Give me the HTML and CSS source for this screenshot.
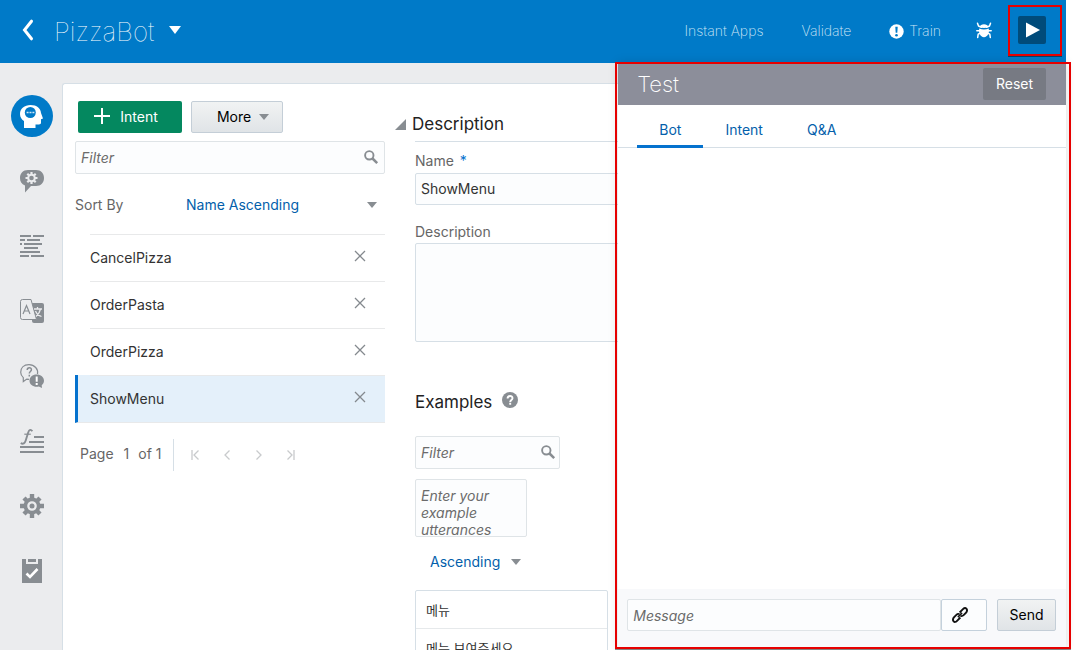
FILE: index.html
```html
<!DOCTYPE html>
<html lang="en">
<head>
<meta charset="utf-8">
<title>PizzaBot</title>
<link rel="stylesheet" href="styles.css">
</head>
<body>
<div class="app">
  <header class="topbar">
    <button class="icon-btn back" aria-label="Back"><svg width="12" height="22" viewBox="0 0 12 22"><path d="M9.500 2.200 2.500 11l7 8.800" fill="none" stroke="#fff" stroke-width="3" stroke-linecap="round" stroke-linejoin="miter"/></svg></button>
    <h1 class="bot-name">PizzaBot</h1>
    <button class="icon-btn" aria-label="Switch bot"><svg width="12" height="8" viewBox="0 0 12 8"><path d="M0 0h12L6 8z" fill="#fff"/></svg></button>
    <nav class="top-nav">
      <a class="top-link" href="#">Instant Apps</a>
      <a class="top-link validate" href="#">Validate</a>
      <a class="top-link train" href="#"><svg width="15" height="15" viewBox="0 0 15 15"><circle cx="7.500" cy="7.500" r="7.200" fill="#fff"/><path d="M6.300 2.800h2.400l-.4 6H6.700z" fill="#007ac8"/><circle cx="7.500" cy="11.200" r="1.300" fill="#007ac8"/></svg>Train</a>
    </nav>
    <button class="icon-btn bug" aria-label="Debug"><svg width="16" height="17" viewBox="0 0 16 17"><g fill="none" stroke="#fff" stroke-width="1.500" stroke-linecap="round" stroke-linejoin="round"><path d="M1.500 1.200 2.500 4l3 1.300M14.500 1.200l-1 2.800-3 1.300M.8 8.700h3M15.200 8.700h-3M4.500 11 2.200 12.200 1.700 15.500M11.500 11l2.300 1.200.5 3.300"/></g><path d="M3.800 5C4 3 5.800 2.200 8 2.200S12 3 12.200 5C9.500 6.300 6.500 6.300 3.800 5z" fill="#fff"/><path d="M3.300 6.600c3 1.300 6.400 1.300 9.400 0 1 3.600-1 8.700-4.700 8.700S2.300 10.200 3.300 6.600z" fill="#fff"/></svg></button>
    <button class="play" aria-label="Test bot"><svg width="14" height="16" viewBox="0 0 14 16"><path d="M0 0.500 14 8 0 15.500z" fill="#fff"/></svg></button>
  </header>
  <div class="workspace">
    <nav class="rail" aria-label="Sections">
      <a class="rail-item current" href="#" aria-label="Intents"><svg width="23" height="25" viewBox="0 0 23 25"><path d="M4 24V17C1.500 15.500 0 13 0 10 0 4.500 4.500 1 10.500 1 17 1 20.500 4.500 21 9l2 5.500-2 .8v3.500c0 1.200-.8 1.700-2 1.700h-3.500V24z" fill="#fff"/><circle cx="10.300" cy="8.500" r="5.500" fill="#007ac8"/><path d="M6.600 7.700h2v1.600h-2zM9.500 7.700h2v1.600h-2zM12.400 7.700h2v1.600h-2z" fill="#cfe8f7"/></svg></a>
      <a class="rail-item" href="#" aria-label="Entities"><svg width="24" height="24" viewBox="0 0 24 24"><path d="M8 1h8c5 0 8 3.500 8 8s-3 8-8 8h-5l-6 6.500v-7C1.500 15.300 0 12.500 0 9c0-4.500 3-8 8-8z" fill="#888d92"/><g transform="translate(11.500 9)" stroke="#ebecee"><path d="M0-6V6M-6 0H6M-4.200-4.200 4.200 4.200M4.200-4.200-4.200 4.200" stroke-width="2.200"/><circle r="3.300" fill="#888d92" stroke-width="2"/></g></svg></a>
      <a class="rail-item" href="#" aria-label="Flows"><svg width="24" height="24" viewBox="0 0 24 24"><path d="M0 2h11M13 2h11M0 6h5M7 6h13M0 10h2M4 10h18M4 14h14M0 18h20M0 22h9M11 22h13" stroke="#888d92" stroke-width="2"/></svg></a>
      <a class="rail-item" href="#" aria-label="Translations"><svg width="24" height="24" viewBox="0 0 24 24"><path d="M12 4h10q2 0 2 2v16q0 2-2 2H14q-2 0-2-2z" fill="#888d92"/><path d="M.5 2.500q0-2 2-2H11L16.500 20.500h-14q-2 0-2-2z" fill="#ebecee" stroke="#888d92"/><path d="M3 15 6.500 6.500 10 15M4.200 12h4.600" fill="none" stroke="#888d92" stroke-width="1.200"/><path d="M14 10h8M17.500 8v2M20.500 10c-.8 4-2.800 6-4.500 7.500M15.500 12c1 2.500 3 4.500 6 5.500" fill="none" stroke="#ebecee" stroke-width="1.300"/></svg></a>
      <a class="rail-item" href="#" aria-label="Q&amp;A"><svg width="24" height="24" viewBox="0 0 24 24"><path d="M17.500 10c1-5-3-9.300-8.500-9.300S.7 4 .7 8.300c0 2.200 1 4 2.600 5.300v4l3.500-2.500 2.200.3" fill="none" stroke="#888d92" stroke-width="1.200"/><path d="M7.200 6c0-3 4.500-3 4.200-.2C11.300 7.600 9.300 7.400 9.300 9.400M9.300 10.700v1.800" fill="none" stroke="#888d92" stroke-width="1.500"/><path d="M16.500 10.500c4.300 0 7.500 2.700 7.500 6.200 0 1.900-.9 3.400-2.300 4.500L22 24l-3.200-1.500c-5 1-9.300-1.800-9.300-5.800 0-3.500 3-6.200 7-6.200z" fill="#888d92"/><path d="M16.700 12.500v5.300M16.700 19v2" stroke="#fff" stroke-width="2"/></svg></a>
      <a class="rail-item" href="#" aria-label="Components"><svg width="24" height="24" viewBox="0 0 24 24"><path d="M14 8h10M9 13h15M0 18h24M0 23h24" stroke="#888d92" stroke-width="2"/><path d="M4.300 5.200h6.500" stroke="#888d92" stroke-width="1.200"/><path d="M12.300 2.200C11 .2 9.200.3 8.200 3.500L5.700 11.500C4.900 14.200 3 15.600.8 14" fill="none" stroke="#888d92" stroke-width="1.900"/></svg></a>
      <a class="rail-item" href="#" aria-label="Settings"><svg width="24" height="24" viewBox="-12 -12 24 24"><path d="M0-12V12M-12 0H12M-8-8 8 8M8-8-8 8" stroke="#888d92" stroke-width="4.400"/><circle r="6.600" fill="#ebecee" stroke="#888d92" stroke-width="3.600"/><circle r="2.500" fill="#888d92"/></svg></a>
      <a class="rail-item" href="#" aria-label="Quality"><svg width="22" height="24" viewBox="0 0 22 24"><path d="M1 0h4v5h12V0h4v24H1z" fill="#888d92"/><path d="M7 0h8v3H7z" fill="#888d92"/><path d="M5.500 14.500 9 18l7.500-8" fill="none" stroke="#fff" stroke-width="2.600"/></svg></a>
    </nav>
    <main class="card">
      <section class="intents">
        <div class="actions">
          <button class="btn-green"><svg width="16" height="16" viewBox="0 0 16 16"><path d="M8 0v16M0 8h16" stroke="#fff" stroke-width="2"/></svg>Intent</button>
          <button class="btn btn-more">More<span class="caret"></span></button>
        </div>
        <label class="search"><input type="text" placeholder="Filter" aria-label="Filter intents"><svg width="14" height="14" viewBox="0 0 14 14"><circle cx="5.300" cy="5.300" r="4.200" fill="none" stroke="#888d92" stroke-width="1.900"/><path d="m8.500 8.500 4.700 4.700" stroke="#888d92" stroke-width="2.500"/></svg></label>
        <div class="sort">
          <label for="sort-by">Sort By</label>
          <div class="picker"><select id="sort-by"><option>Name Ascending</option></select><span class="caret"></span></div>
        </div>
        <ul class="intent-list">
          <li class="intent"><div class="intent-row"><span>CancelPizza</span><button class="icon-btn" aria-label="Delete CancelPizza"><svg width="10" height="10" viewBox="0 0 10 10"><path d="m0 0 10 10M10 0 0 10" stroke="#84898e" stroke-width="1.300"/></svg></button></div></li>
          <li class="intent"><div class="intent-row"><span>OrderPasta</span><button class="icon-btn" aria-label="Delete OrderPasta"><svg width="10" height="10" viewBox="0 0 10 10"><path d="m0 0 10 10M10 0 0 10" stroke="#84898e" stroke-width="1.300"/></svg></button></div></li>
          <li class="intent"><div class="intent-row"><span>OrderPizza</span><button class="icon-btn" aria-label="Delete OrderPizza"><svg width="10" height="10" viewBox="0 0 10 10"><path d="m0 0 10 10M10 0 0 10" stroke="#84898e" stroke-width="1.300"/></svg></button></div></li>
          <li class="intent selected"><div class="intent-row"><span>ShowMenu</span><button class="icon-btn" aria-label="Delete ShowMenu"><svg width="10" height="10" viewBox="0 0 10 10"><path d="m0 0 10 10M10 0 0 10" stroke="#84898e" stroke-width="1.300"/></svg></button></div></li>
        </ul>
        <div class="pager">
          <div class="pager-text"><span>Page</span><span>1</span><span class="of">of 1</span></div>
          <div class="pager-buttons">
            <button class="icon-btn" aria-label="First page" disabled><svg width="8" height="10" viewBox="0 0 8 10"><path d="M1 0v10M7.500.5 3 5l4.500 4.500" fill="none" stroke="#c8cacc" stroke-width="1.300"/></svg></button>
            <button class="icon-btn" aria-label="Previous page" disabled><svg width="8" height="10" viewBox="0 0 8 10"><path d="M6.500.5 2 5l4.500 4.500" fill="none" stroke="#c8cacc" stroke-width="1.300"/></svg></button>
            <button class="icon-btn" aria-label="Next page" disabled><svg width="8" height="10" viewBox="0 0 8 10"><path d="M1.500.5 6 5 1.500 9.500" fill="none" stroke="#c8cacc" stroke-width="1.300"/></svg></button>
            <button class="icon-btn" aria-label="Last page" disabled><svg width="8" height="10" viewBox="0 0 8 10"><path d="M7 0v10M.5.5 5 5 .5 9.500" fill="none" stroke="#c8cacc" stroke-width="1.300"/></svg></button>
          </div>
        </div>
      </section>
      <section class="editor">
        <h2 class="section-title description-title"><svg width="11" height="11" viewBox="0 0 11 11"><path d="M11 0v11H0z" fill="#888d92"/></svg>Description</h2>
        <div class="details">
          <label class="field-label name-label" for="name">Name <span class="required">*</span></label>
          <input class="field" id="name" type="text" value="ShowMenu">
          <label class="field-label description-label" for="description">Description</label>
          <textarea class="field description" id="description"></textarea>
        </div>
        <div class="examples">
          <h2 class="section-title">Examples <svg class="help" width="16" height="16" viewBox="0 0 16 16"><circle cx="8" cy="8" r="8" fill="#888d92"/><path d="M5.600 6.500c0-3.300 5-3.200 4.900-.2C10.400 8 8.200 7.900 8.200 9.900M8.200 10.800v2" fill="none" stroke="#fff" stroke-width="1.900"/></svg></h2>
          <label class="search example-search"><input type="text" placeholder="Filter" aria-label="Filter examples"><svg width="14" height="14" viewBox="0 0 14 14"><circle cx="5.300" cy="5.300" r="4.200" fill="none" stroke="#888d92" stroke-width="1.900"/><path d="m8.500 8.500 4.700 4.700" stroke="#888d92" stroke-width="2.500"/></svg></label>
          <textarea class="field utterance" aria-label="Example utterances" placeholder="Enter your example utterances here"></textarea>
          <div class="picker order"><select aria-label="Example order"><option>Ascending</option></select><span class="caret"></span></div>
          <ul class="example-list" lang="ko"><li>메뉴</li><li>메뉴 보여주세요</li></ul>
        </div>
      </section>
    </main>
  </div>
  <aside class="tester">
    <div class="tester-head"><h2>Test</h2><button class="reset">Reset</button></div>
    <div class="tabs" role="tablist">
      <button class="tab active" role="tab" aria-selected="true">Bot</button>
      <button class="tab" role="tab" aria-selected="false">Intent</button>
      <button class="tab" role="tab" aria-selected="false">Q&amp;A</button>
    </div>
    <div class="conversation"></div>
    <form class="composer">
      <input class="field message" type="text" placeholder="Message" aria-label="Message">
      <button class="attach" type="button" aria-label="Attach link"><svg width="16" height="16" viewBox="0 0 16 16"><g transform="rotate(-45 8 8)" fill="none" stroke="#111" stroke-width="1.900"><path d="M6.500 10H1.800Q-1 10-1 8t2.800-2.700h3.400Q7.500 5.300 8.300 7"/><path d="M9.500 6h4.700Q17 6 17 8t-2.800 2.700h-3.400Q8.500 10.700 7.700 9"/><path d="M5 8h6" stroke-width="1.500"/></g></svg></button>
      <button class="btn send" type="button">Send</button>
    </form>
    <div class="highlight tester-highlight"></div>
  </aside>
  <div class="highlight play-highlight"></div>
</div>
</body>
</html>
```
FILE: styles.css
```css
* { box-sizing: border-box; }

body {
  margin: 0;
  background: #fff;
  color: #333;
  font: 14px/18px Inter, "Noto Sans CJK KR", sans-serif;
}

h1, h2, ul { margin: 0; padding: 0; font-weight: 400; list-style: none; }
button, input, select, textarea { margin: 0; font: inherit; color: inherit; }
button { cursor: pointer; }
svg { display: block; flex: none; overflow: visible; }
a { color: inherit; text-decoration: none; }

.app {
  position: relative;
  display: flex;
  flex-direction: column;
  height: calc(100vh - 3px);
  margin-right: 9px;
}

.icon-btn { padding: 0; border: 0; background: none; }

/* Top bar */
.topbar {
  display: flex;
  flex: none;
  align-items: center;
  height: 63px;
  padding: 0 20px 3px 22px;
  background: #007ac8;
  color: #fff;
}
.bot-name { margin: 4px 15px 0 20px; font-size: 26px; line-height: 34px; font-weight: 100; }
.top-nav { display: flex; align-items: center; margin-left: auto; padding-top: 2px; font-weight: 200; color: #cfe6f6; }
.validate { margin-left: 38px; }
.train { display: flex; gap: 5px; align-items: center; margin-left: 38px; }
.bug { margin-left: 35px; }
.play {
  display: grid;
  place-items: center;
  width: 28px;
  height: 28px;
  margin-left: 26px;
  padding: 0 0 0 2px;
  border: 0;
  border-radius: 2px;
  background: #004b7a;
}

/* Workspace */
.workspace { display: flex; flex: 1; min-height: 0; overflow: hidden; background: #ebecee; }
.rail { display: flex; flex: none; flex-direction: column; gap: 23px; align-items: center; width: 62px; padding: 32px 0 0 1px; }
.rail-item { display: grid; place-items: center; width: 42px; height: 42px; }
.rail-item.current { border-radius: 50%; background: #007ac8; }
.card {
  display: flex;
  flex: 1;
  gap: 10px;
  min-width: 0;
  margin-top: 20px;
  padding-left: 12px;
  border: 1px solid #d6dfe6;
  border-width: 1px 0 0 1px;
  border-top-left-radius: 3px;
  background: #fff;
}

.intents { flex: none; width: 310px; padding-top: 17px; }
.actions { display: flex; gap: 9px; padding: 0 3px 8px; }
.btn, .btn-green { display: flex; align-items: center; justify-content: center; height: 32px; padding: 0; border-radius: 2px; }
.btn { border: 1px solid #c4ced7; background: linear-gradient(#f1f3f3, #e0e4e7); color: #000; }
.btn-green { gap: 10px; width: 104px; padding-right: 8px; border: 0; background: #04885f; color: #fff; }
.btn-green svg { margin-bottom: 3px; }
.btn-more { gap: 8px; width: 92px; padding-left: 12px; }
.caret { flex: none; border: 5px solid transparent; border-top: 6px solid #888d92; border-bottom: 0; }

.field, .search {
  border: 1px solid #dfe4e7;
  border-radius: 2px;
  background: #fcfdfe;
}
.search { display: flex; align-items: center; height: 33px; padding: 0 6px 0 5px; }
.search input { flex: 1; min-width: 0; padding: 0; border: 0; outline: 0; background: none; }
.search svg { margin-bottom: 2px; }
::placeholder { color: #6b6b6b; font-style: italic; opacity: 1; }

.sort { display: grid; grid-template-columns: 111px 1fr; align-items: center; height: 60px; padding-top: 2px; color: #666; }
.picker { display: flex; align-items: center; }
.picker select { flex: 1; min-width: 0; padding: 0; border: 0; outline: 0; background: none; color: #045fab; appearance: none; }
.sort .picker { padding-right: 8px; }

.intent { padding-left: 15px; }
.intent-row { display: flex; align-items: center; justify-content: space-between; height: 47px; padding-right: 20px; border-top: 1px solid #e8e9ea; }
.intent-row .icon-btn { padding-bottom: 4px; }
.intent.selected { padding-left: 12px; border-bottom: 1px solid #e8e9ea; border-left: 3px solid #0572ce; background: #e4f0fa; }

.pager { display: flex; align-items: center; margin-top: 16px; padding-left: 5px; color: #666; }
.pager-text { display: flex; gap: 10px; align-items: center; height: 32px; padding: 0 12px 2px 0; border-right: 1px solid #d6dfe6; }
.of { margin-left: -1px; }
.pager-buttons { display: flex; gap: 24px; padding-left: 17px; }

/* Intent details */
.editor { flex: 1; min-width: 0; }
.section-title { display: flex; gap: 10px; align-items: center; font-size: 17px; line-height: 24px; color: #222; }
.description-title { gap: 6px; padding-top: 28px; }
.details { display: flex; flex-direction: column; margin: 5px 0 0 20px; border-top: 1px solid #d6dfe6; }
.field { padding: 6px 5px; outline: 0; }
.details .field { border-color: #d6dfe6; }
.field-label { color: #666; }
.name-label { padding: 10px 0 3px; }
.required { padding-left: 2px; color: #0572ce; }
.description-label { padding: 18px 0 2px; }
.description { height: 99px; resize: none; }
.examples { display: flex; flex-direction: column; align-items: flex-start; margin: 48px 0 0 20px; }
.help { margin-bottom: 4px; }
.example-search { width: 145px; margin-top: 22px; padding-right: 4px; }
.utterance { width: 112px; height: 58px; margin-top: 10px; padding: 7px 5px 0; overflow: hidden; resize: none; line-height: 17px; }
.order { gap: 10px; height: 50px; padding-left: 15px; }
.example-list { width: 193px; margin-top: 3px; border: 1px solid #d6dfe6; border-radius: 2px 2px 0 0; font-size: 13px; }
.example-list li { height: 38px; padding: 10px; border-bottom: 1px solid #e6e9eb; line-height: 18px; white-space: nowrap; }

/* Test drawer */
.tester {
  position: absolute;
  top: 63px;
  right: 0;
  bottom: 1px;
  display: flex;
  flex-direction: column;
  width: 42%;
  min-width: 400px;
  background: #fff;
  box-shadow: 0 0 10px rgba(0, 0, 0, .15);
}
.tester-head { display: flex; align-items: center; justify-content: space-between; height: 42px; padding: 0 20px 0 19px; background: #8c8e9a; color: #fff; }
.tester-head h2 { font-size: 22px; line-height: 28px; font-weight: 200; }
.reset { width: 63px; height: 32px; padding: 0; border: 0; border-radius: 2px; background: #777a83; color: #fff; }
.tabs { display: flex; height: 43px; padding-left: 19px; border-bottom: 1px solid #d6dfe6; }
.tab { height: 43px; padding: 9px 22px 0; border: 0; border-bottom: 3px solid transparent; background: none; color: #045fab; }
.tab.active { border-bottom-color: #0572ce; }
.conversation { flex: 1; }
.composer { display: flex; height: 60px; padding: 10px 10px 0 9px; background: #f8f9fb; }
.message { flex: 1; min-width: 0; height: 32px; }
.attach { display: grid; place-items: center; width: 46px; height: 32px; padding: 0 9px 0 0; border: 1px solid #c4d1dc; border-radius: 2px; background: #fcfdfe; }
.send { width: 59px; margin-left: 10px; }

.highlight { position: absolute; border: 2px solid #e60000; box-shadow: 0 1px 0 rgba(0, 0, 0, .45); pointer-events: none; }
.tester-highlight { inset: -1px -5px 0 -3px; }
.play-highlight { top: 5px; right: 4px; width: 54px; height: 51px; }
```
